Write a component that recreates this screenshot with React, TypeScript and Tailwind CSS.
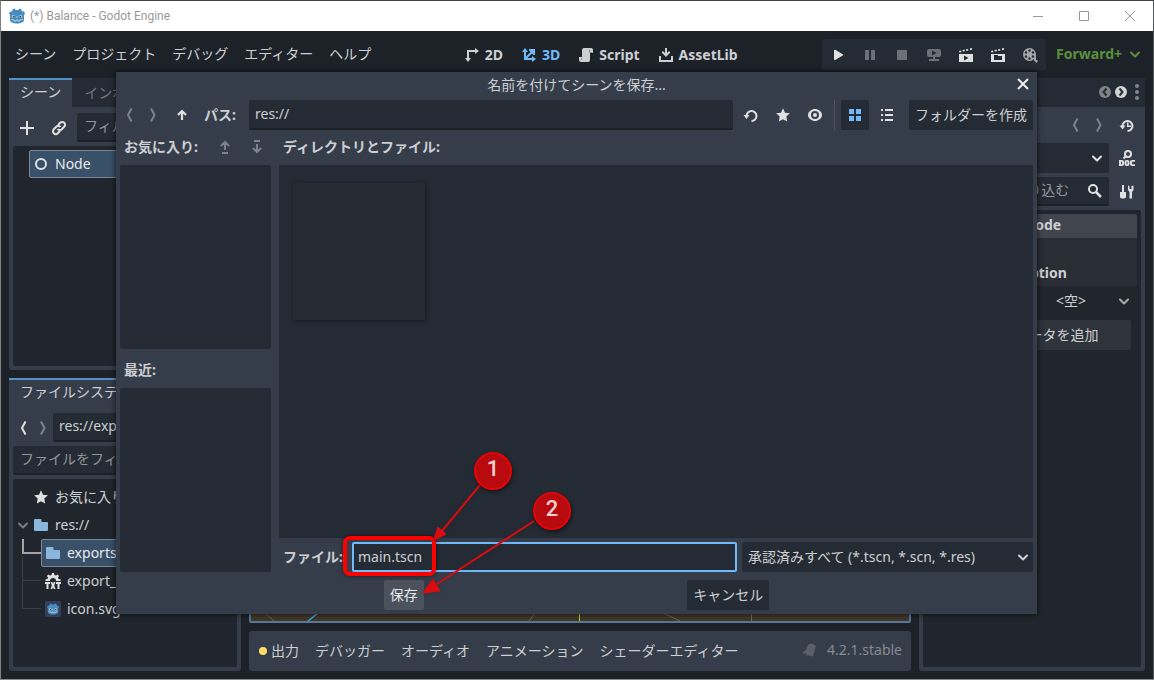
import type { ReactNode } from "react";

function Icon({ children, className = "" }: { children: ReactNode; className?: string }) {
  return (
    <svg viewBox="0 0 16 16" className={`size-4 shrink-0 ${className}`} fill="currentColor" aria-hidden="true">
      {children}
    </svg>
  );
}

function Stroke({ d, className = "", width = 2 }: { d: string; className?: string; width?: number }) {
  return (
    <Icon className={className}>
      <path d={d} fill="none" stroke="currentColor" strokeWidth={width} />
    </Icon>
  );
}

const ChevronLeft = ({ className = "" }) => <Stroke className={className} d="M10.500 1.500 7 8l3.500 6.500" />;
const ChevronRight = ({ className = "" }) => <Stroke className={className} d="M6 1.500 9.500 8 6 14.500" />;
const ChevronDown = ({ className = "" }) => (
  <Icon className={className}>
    <path d="m4 6.500 4 4 4-4" fill="none" stroke="currentColor" strokeWidth="2" strokeLinecap="round" strokeLinejoin="round" />
  </Icon>
);
const Star = ({ className = "" }) => (
  <Icon className={className}>
    <path d="M8 1.200 10 5.700l4.900.6-3.600 3.300.9 5L8 12.200l-4.200 2.400.9-5L1.100 6.300 6 5.700z" />
  </Icon>
);
const Folder = () => (
  <Icon className="text-[#8ab6dd]">
    <path d="M1 3a1 1 0 0 1 1-1h5.500a1 1 0 0 1 1 1v2H14a1 1 0 0 1 1 1v7a1 1 0 0 1-1 1H2a1 1 0 0 1-1-1z" />
  </Icon>
);

function GodotHead({ className = "" }: { className?: string }) {
  return (
    <svg viewBox="0 0 16 16" className={`size-4 shrink-0 ${className}`} aria-hidden="true">
      <path fill="#478cbf" d="M5.500.500 6.500 2h3l1-1.500 2 .8v1.500l1.300.7L15 3.500l1 2-1 1.500v5c0 2-3.200 3.500-7 3.500S1 14 1 12V7L0 5.500l1-2 1.200.3 1.300-1V1.300z" />
      <circle cx="4.400" cy="8.600" r="1.500" fill="#dfe9f2" />
      <circle cx="11.600" cy="8.600" r="1.500" fill="#dfe9f2" />
      <circle cx="4.600" cy="8.700" r="1" fill="#414042" />
      <circle cx="11.400" cy="8.700" r="1" fill="#414042" />
      <path d="M8 8v2M2 11.500l3 .4.300 1.300h1.500l.3-1.200h1.800l.3 1.200h1.500l.3-1.300 3-.4" stroke="#dfe9f2" strokeWidth=".7" fill="none" />
    </svg>
  );
}

function TitleBar() {
  return (
    <header className="flex h-[30px] items-center bg-white pl-2 text-[#999999]">
      <GodotHead />
      <span className="ml-[5px] flex-1 font-['Roboto',sans-serif] text-xs">(*) Balance - Godot Engine</span>
      <button aria-label="最小化" className="flex h-full w-[46px] items-center justify-center">
        <Stroke width={1} d="M3 8.500h10" />
      </button>
      <button aria-label="最大化" className="flex h-full w-[46px] items-center justify-center">
        <Stroke width={1} d="M3.500 3.500h9v9h-9z" />
      </button>
      <button aria-label="閉じる" className="flex h-full w-[46px] items-center justify-center">
        <Stroke width={1} d="m3 3 10 10M13 3 3 13" />
      </button>
    </header>
  );
}

function ModeButton({ label, icon, active = false }: { label: string; icon: ReactNode; active?: boolean }) {
  return (
    <button className={`flex items-center gap-[5px] font-bold ${active ? "text-[#70bafa]" : "text-[#cdcfd2]"}`}>
      {icon}
      {label}
    </button>
  );
}

function RunButton({ label, dim = false, children }: { label: string; dim?: boolean; children: ReactNode }) {
  return (
    <button aria-label={label} className={`flex h-full w-8 items-center justify-center ${dim ? "text-[#6c7078]" : "text-[#e0e0e0]"}`}>
      <Icon>{children}</Icon>
    </button>
  );
}

function MenuBar() {
  return (
    <div className="flex items-center px-2 py-2">
      <nav className="flex gap-4 pb-[2px] pl-[6px] pr-2">
        {["シーン", "プロジェクト", "デバッグ", "エディター", "ヘルプ"].map((m) => (
          <button key={m}>{m}</button>
        ))}
      </nav>
      <div className="flex flex-1 justify-center gap-[18px]">
        <ModeButton
          label="2D"
          icon={
            <Icon>
              <path d="M3 3h8V1l4 3-4 3V5H5v6h2l-3 4-3-4h2z" />
            </Icon>
          }
        />
        <ModeButton
          active
          label="3D"
          icon={
            <Icon>
              <path d="M3 5H1l3-4 3 4H5v4.600l4.600-4.600L8 3.500V2h6v6h-1.500L11 6.400 6.400 11H11V9l4 3-4 3v-2H3z" />
            </Icon>
          }
        />
        <ModeButton
          label="Script"
          icon={
            <Icon>
              <path d="M6 1a2 2 0 0 0-2 2v7H1v3a2 2 0 0 0 2 2h7a2 2 0 0 0 2-2V6h3V3a2 2 0 0 0-2-2z" />
              <path d="M11.500 2.500V5.500h3M3.500 11v2" stroke="#8b8d90" fill="none" />
            </Icon>
          }
        />
        <ModeButton
          label="AssetLib"
          icon={
            <Icon>
              <path d="M7 1h2v5l2-2 1.400 1.400L8 10 3.600 5.400 5 4l2 2zM1 9h2v4h10V9h2v6H1z" />
            </Icon>
          }
        />
      </div>
      <div className="flex h-[31px] rounded-[3px] bg-[#252b34]">
        <RunButton label="実行">
          <path d="M4 3.500a.8.800 0 0 1 1.200-.7l7.500 4.400a.8.800 0 0 1 0 1.400l-7.500 4.400a.8.800 0 0 1-1.200-.7z" />
        </RunButton>
        <RunButton label="一時停止" dim>
          <path d="M3 3h4v10H3zM9 3h4v10H9z" />
        </RunButton>
        <RunButton label="停止" dim>
          <path d="M3 3h10v10H3z" />
        </RunButton>
        <RunButton label="リモートデバッグ" dim>
          <path fillRule="evenodd" d="M3 2h10a2 2 0 0 1 2 2v4a2 2 0 0 1-2 2H9v2h4v2H3v-2h4v-2H3a2 2 0 0 1-2-2V4a2 2 0 0 1 2-2zm3 1.500v5L10.500 6z" />
        </RunButton>
        <RunButton label="現在のシーンを実行">
          <path fillRule="evenodd" d="M1 7h14v8H1zm5 1.500v5l4.500-2.500z" />
          <path d="m1 4 2-.4.400 1.600-2 .4zM4.500 3l2-.4.400 1.600-2 .4zM8 2.300l2-.4.400 1.600-2 .4zM11.800 1.500l2-.4.400 1.600-2 .4z" />
        </RunButton>
        <RunButton label="選択したシーンを実行">
          <path fillRule="evenodd" d="M1 7h14v8H1zm3 1v5h8V9H8V8z" />
          <path d="m1 4 2-.4.400 1.600-2 .4zM4.500 3l2-.4.400 1.600-2 .4zM8 2.300l2-.4.400 1.600-2 .4zM11.800 1.500l2-.4.400 1.600-2 .4z" />
        </RunButton>
        <RunButton label="ムービー">
          <g className="text-[#a5a7aa]" fill="currentColor">
            <path d="M12 8h2v5h1.500v2.500H14l-2-2z" />
            <circle cx="7.500" cy="7.500" r="6.500" />
          </g>
          <g fill="#252b34">
            <circle cx="7.500" cy="3.500" r="1.200" />
            <circle cx="4" cy="5.500" r="1.200" />
            <circle cx="11" cy="5.500" r="1.200" />
            <circle cx="4" cy="9.500" r="1.200" />
            <circle cx="11" cy="9.500" r="1.200" />
            <circle cx="7.500" cy="11.500" r="1.200" />
          </g>
        </RunButton>
      </div>
      <button className="ml-[10px] flex items-center gap-[5px] pb-px pr-[2px] font-bold text-[#5b8f3c]">
        Forward+
        <ChevronDown />
      </button>
    </div>
  );
}

const fieldClass = "min-w-0 rounded-[2px] border-b-2 border-[#1c2127] bg-[#252b34] pb-[2px] placeholder:text-[#92959b] outline-none";
const tabClass = "border-t-2 border-[#5391c9] bg-[#363d4a] px-[11px] pb-[3px]";

function SceneDock() {
  return (
    <section className="flex min-h-0 flex-1 flex-col rounded-[3px] bg-[#363d4a]">
      <div className="flex h-[29px] bg-[#252b34]">
        <button className={tabClass}>シーン</button>
        <button className="px-3 text-[#73777e]">インポート</button>
      </div>
      <div className="flex flex-1 flex-col px-1 pb-1 pt-[6px]">
        <div className="flex h-[29px] items-center">
          <button aria-label="ノードを追加" className="flex w-[28px] justify-center text-[#e0e0e0]">
            <Stroke d="M8 1v14M1 8h14" />
          </button>
          <button aria-label="シーンをインスタンス化" className="ml-1 flex w-[28px] justify-center text-[#e0e0e0]">
            <Stroke d="m7 5 2.200-2.200a2.800 2.800 0 0 1 4 4L10.500 9.500A2.800 2.800 0 0 1 6.500 9M9 11l-2.200 2.200a2.800 2.800 0 0 1-4-4L5.500 6.500A2.800 2.800 0 0 1 9.500 7" />
          </button>
          <input aria-label="ノードのフィルター" placeholder="フィルター" className={`ml-1 h-full flex-1 px-[7px] ${fieldClass}`} />
        </div>
        <div className="mt-1 flex-1 rounded-[2px] bg-[#21262e] py-1 pl-4">
          <button className="flex h-7 w-full items-center gap-[6px] rounded-[2px] border border-[#7b8793] bg-[#385068] pl-[3px] text-[#e8eaec]">
            <Icon>
              <circle cx="8" cy="8" r="5" fill="none" stroke="#e0e0e0" strokeWidth="2" />
            </Icon>
            Node
          </button>
        </div>
      </div>
    </section>
  );
}

function FileSystemDock() {
  return (
    <section className="flex h-[293px] flex-col rounded-[3px] bg-[#363d4a]">
      <div className="flex h-[29px] bg-[#252b34]">
        <button className={tabClass}>ファイルシステム</button>
      </div>
      <div className="flex flex-1 flex-col gap-1 px-1 pb-1 pt-[6px]">
        <div className="flex h-[29px] items-center">
          <button aria-label="戻る" className="flex w-5 justify-center text-[#e0e0e0]"><ChevronLeft /></button>
          <button aria-label="進む" className="flex w-5 justify-center text-[#7c818a]"><ChevronRight /></button>
          <input aria-label="現在のパス" defaultValue="res://exports" className={`h-full flex-1 px-[6px] ${fieldClass}`} />
        </div>
        <input aria-label="ファイルのフィルター" placeholder="ファイルをフィルター" className={`h-[29px] px-[7px] ${fieldClass}`} />
        <ul className="flex-1 rounded-[2px] bg-[#21262e] py-1">
          <li className="flex h-7 items-center gap-[6px] pl-5">
            <Star className="text-[#e0e0e0]" />
            お気に入り:
          </li>
          <li className="flex h-7 items-center pl-[2px]">
            <ChevronDown className="text-[#797d83]" />
            <span className="flex items-center gap-[6px] pl-[2px]">
              <Folder />
              res://
            </span>
          </li>
          <li className="flex h-7 items-center">
            <svg viewBox="0 0 28 28" className="h-7 w-7 shrink-0" fill="none" aria-hidden="true">
              <path d="M10 0v14h18" stroke="#a2a4a7" strokeWidth="2" />
              <path d="M9.500 17v11" stroke="#3b4048" />
            </svg>
            <button className="flex h-7 flex-1 items-center gap-[6px] rounded-[2px] border border-[#7b8793] bg-[#385068] pl-[3px] text-[#e8eaec]">
              <Folder />
              exports
            </button>
          </li>
          <li className="flex h-7 items-center">
            <svg viewBox="0 0 28 28" className="h-7 w-7 shrink-0" fill="none" aria-hidden="true">
              <path d="M9.500 0v28M9.500 13.500h18.500" stroke="#3b4048" />
            </svg>
            <span className="flex items-center gap-[6px] pl-1">
              <Icon className="text-[#e0e0e0]">
                <path fillRule="evenodd" d="M7 0h2l.4 2 1.500.6 1.700-1.100 1.400 1.400L13 4.600l.6 1.400 2 .4V8H11a3 3 0 0 0-6 0H.4V6.400l2-.4L3 4.600 1.900 2.900l1.400-1.400L5 2.600 6.500 2z" />
                <path d="M0 9h5v2H3.500v5h-2v-5H0zM5.500 9h1.800l.7 2 .7-2h1.800L9.200 12.500l1.300 3.500H8.700L8 14l-.7 2H5.500l1.300-3.500zM11 9h5v2h-1.500v5h-2v-5H11z" />
              </Icon>
              export_presets.cfg
            </span>
          </li>
          <li className="flex h-7 items-center">
            <svg viewBox="0 0 28 28" className="h-7 w-7 shrink-0" fill="none" aria-hidden="true">
              <path d="M9.500 0v13.500h18.500" stroke="#3b4048" />
            </svg>
            <span className="flex items-center gap-[6px] pl-1">
              <span className="flex size-4 items-center justify-center rounded-[2px] bg-[#363d5a]">
                <GodotHead className="scale-75" />
              </span>
              icon.svg
            </span>
          </li>
        </ul>
      </div>
    </section>
  );
}

function Center() {
  return (
    <main className="flex min-w-0 flex-1 flex-col gap-2">
      <div className="flex flex-1 flex-col justify-end rounded-[2px] border-2 border-[#567898] bg-[#423529]">
        <svg viewBox="0 0 658 8" preserveAspectRatio="none" className="h-2 w-full" fill="none" aria-hidden="true">
          <path d="m14 0 9 8M284 0l-6 8M412 0l17 8M500.500 0v8" stroke="#6f665c" />
          <path d="m67 0-10 8" stroke="#38a4f0" strokeWidth="1.500" />
          <path d="M328.500 0v8" stroke="#a4dc1c" />
        </svg>
      </div>
      <div className="flex h-10 items-center gap-4 rounded-[3px] bg-[#363d4a] pl-[10px] pr-[9px]">
        <button className="flex items-center gap-1">
          <span className="size-2 rounded-full bg-[#ffdd65]" />
          出力
        </button>
        {["デバッガー", "オーディオ", "アニメーション", "シェーダーエディター"].map((t) => (
          <button key={t}>{t}</button>
        ))}
        <span className="ml-auto flex items-center gap-[9px] pb-[2px] text-[#868a92]">
          <Icon className="text-[#5a5f69]">
            <path d="M10 1.500c-4 0-5 3-5.500 5.500L1 10.500v1h3a2 2 0 0 0 3 2l4 1 .5-2.500 1.500-5 .8-3z" />
          </Icon>
          4.2.1.stable
        </span>
      </div>
    </main>
  );
}

function Inspector() {
  return (
    <aside className="flex w-[226px] flex-col rounded-[3px] bg-[#363d4a]">
      <div className="flex h-[29px] items-stretch bg-[#252b34]">
        <button className={tabClass}>インスペクター</button>
        <div className="ml-auto flex items-center pb-[2px]">
          <button aria-label="前のタブ" className="text-[#808387]">
            <Icon>
              <circle cx="8" cy="8" r="6" />
              <path d="M9.500 4.500 6.500 8l3 3.500" stroke="#252b34" strokeWidth="2" fill="none" />
            </Icon>
          </button>
          <button aria-label="次のタブ" className="text-[#d4d5d7]">
            <Icon>
              <circle cx="8" cy="8" r="6" />
              <path d="m6.500 4.500 3 3.500-3 3.500" stroke="#252b34" strokeWidth="2" fill="none" />
            </Icon>
          </button>
          <button aria-label="メニュー" className="text-[#80838a]">
            <Icon>
              <circle cx="8" cy="2" r="2" />
              <circle cx="8" cy="8" r="2" />
              <circle cx="8" cy="14" r="2" />
            </Icon>
          </button>
        </div>
      </div>
      <div className="flex flex-1 flex-col gap-1 p-1">
        <div className="flex h-7 items-center justify-end pr-[6px] text-[#7c818a]">
          <button aria-label="戻る" className="w-6"><ChevronLeft /></button>
          <button aria-label="進む" className="w-6"><ChevronRight /></button>
          <button aria-label="履歴" className="ml-1 text-[#e0e0e0]">
            <Icon>
              <path d="M3.500 9a5 5 0 1 1 5 5" fill="none" stroke="currentColor" strokeWidth="2" />
              <path d="M.5 8.500h6l-3 4zM8 5.500h1.500v3H12V10H8z" />
            </Icon>
          </button>
        </div>
        <div className="flex h-[30px] items-center gap-[10px] pr-[6px]">
          <div className="relative h-full flex-1">
            <select aria-label="オブジェクト" className="h-full w-full appearance-none rounded-[2px] bg-[#252b34] pl-2">
              <option>Node</option>
            </select>
            <ChevronDown className="pointer-events-none absolute right-1 top-[7px] text-[#e0e0e0]" />
          </div>
          <button aria-label="ドキュメントを開く" className="text-[#e0e0e0]">
            <Icon>
              <circle cx="9" cy="4" r="3" fill="none" stroke="currentColor" strokeWidth="2" />
              <path d="M7 6 4.500 8.500" stroke="currentColor" strokeWidth="2" />
              <path fillRule="evenodd" d="M0 10h3a2 2 0 0 1 2 2v2a2 2 0 0 1-2 2H0zm2 1.800v2.400h1v-2.400zM7.500 10h1A2.200 2.200 0 0 1 10.500 12v2a2 2 0 0 1-2 2h-1a2 2 0 0 1-2-2v-2a2 2 0 0 1 2-2zm0 1.800v2.400h1v-2.400zM13 10h3v1.800h-3v2.400h3V16h-3a2 2 0 0 1-2-2v-2a2 2 0 0 1 2-2z" />
            </Icon>
          </button>
        </div>
        <div className="flex h-[29px] items-center gap-[10px] pr-[6px]">
          <div className="relative h-full flex-1">
            <input aria-label="プロパティの絞り込み" placeholder="プロパティを絞り込む" className={`h-full w-full px-[7px] ${fieldClass}`} />
            <Icon className="pointer-events-none absolute right-[6px] top-[6px] text-[#e0e0e0]">
              <circle cx="6" cy="6" r="4" fill="none" stroke="currentColor" strokeWidth="2" />
              <path d="m9 9 5 5" stroke="currentColor" strokeWidth="2.500" />
            </Icon>
          </div>
          <button aria-label="設定" className="text-[#e0e0e0]">
            <Icon>
              <path d="M3 1h2v7h2v4a2 2 0 0 1-2 2.500H3A2 2 0 0 1 1 12V8h2zM9 1.500l1.500.5v3h2V2l2-.5V6L13 8v6.500h-2.500V8L9 6z" />
            </Icon>
          </button>
        </div>
        <div className="flex-1 rounded-[2px] bg-[#21262e] p-1">
          <div className="flex h-6 items-center justify-center gap-[5px] rounded-t-[2px] bg-[#41454e] pb-[2px] font-bold">
            <Icon>
              <circle cx="8" cy="8" r="5" fill="none" stroke="#e0e0e0" strokeWidth="2" />
            </Icon>
            Node
          </div>
          <div className="flex h-12 items-end bg-[#292d35] pb-[3px] pl-[14px] font-bold">Editor Description</div>
          <div className="flex h-[30px] items-center pl-[129px] pr-[5px]">
            <button className="flex flex-1 items-center justify-between">
              &lt;空&gt;
              <ChevronDown className="text-[#a9abae]" />
            </button>
          </div>
          <button className="mr-[6px] mt-1 flex h-[30px] w-[204px] items-center justify-center gap-1 rounded-[2px] bg-[#2f333c] pl-[7px]">
            <Stroke d="M8 2v12M2 8h12" />
            メタデータを追加
          </button>
        </div>
      </div>
    </aside>
  );
}

function ToolButton({ label, className = "", children }: { label: string; className?: string; children: ReactNode }) {
  return (
    <button aria-label={label} className={`flex h-full items-center justify-center rounded-[2px] ${className}`}>
      {children}
    </button>
  );
}

function Annotations() {
  return (
    <div className="pointer-events-none absolute inset-0 font-['Roboto',sans-serif] text-[22px] font-medium leading-none text-[#f6d0d2]">
      <div className="absolute left-[227px] top-[464px] h-[40px] w-[93px] rounded-[7px] border-4 border-[#ff0000] shadow-[0_0_4px_rgba(0,0,0,0.6)]" />
      <svg className="absolute left-0 top-0 h-[542px] w-[500px] drop-shadow-sm" viewBox="0 0 500 542" aria-hidden="true">
        <g fill="#d80c10" stroke="#d80c10">
          <path d="M364 413 326 459M418 449 321 512" strokeWidth="2" />
          <path d="m317 469 5-14 8 7zM307 521l10-14 7 12z" strokeWidth="1" />
        </g>
      </svg>
      <span className="absolute left-[358px] top-[380px] flex size-[38px] items-center justify-center rounded-full border-2 border-[#e30408] bg-[#b90a0f] pb-1 shadow-[1px_2px_4px_rgba(0,0,0,0.5)]">1</span>
      <span className="absolute left-[417px] top-[420px] flex size-[38px] items-center justify-center rounded-full border-2 border-[#e30408] bg-[#b90a0f] pb-1 shadow-[1px_2px_4px_rgba(0,0,0,0.5)]">2</span>
    </div>
  );
}

function SaveDialog() {
  return (
    <div
      role="dialog"
      aria-label="名前を付けてシーンを保存..."
      className="absolute left-[115px] right-[116px] top-[71px] bg-[#363d4a] px-1 pb-1 shadow-[0_0_5px_1px_rgba(0,0,0,0.55)]"
    >
      <div className="relative flex h-7 items-center justify-center pb-[2px]">
        名前を付けてシーンを保存...
        <button aria-label="閉じる" className="absolute right-[2px] top-1 text-[#eeeeee]">
          <Stroke d="m3 3 10 10M13 3 3 13" />
        </button>
      </div>

      <div className="flex h-[30px] items-center text-[#e0e0e0]">
        <ToolButton label="戻る" className="w-[18px] text-[#7c818a]"><ChevronLeft /></ToolButton>
        <ToolButton label="進む" className="ml-[6px] w-[18px] text-[#7c818a]"><ChevronRight /></ToolButton>
        <ToolButton label="上へ" className="ml-[6px] w-[28px]">
          <Icon>
            <path d="M8 13V5M4 8l4-4 4 4" fill="none" stroke="currentColor" strokeWidth="2.200" strokeLinejoin="round" />
          </Icon>
        </ToolButton>
        <label htmlFor="path" className="ml-2 w-[45px] font-bold text-[#cdcfd2]">パス:</label>
        <input id="path" defaultValue="res://" className={`h-full flex-1 px-[6px] text-[#cdcfd2] ${fieldClass}`} />
        <ToolButton label="再読み込み" className="ml-1 w-7">
          <Icon>
            <path d="M3.500 9a5 5 0 1 1 5 5" fill="none" stroke="currentColor" strokeWidth="2" />
            <path d="M.5 8h6l-3 4z" />
          </Icon>
        </ToolButton>
        <ToolButton label="お気に入り" className="ml-1 w-7"><Star /></ToolButton>
        <ToolButton label="隠しファイル" className="ml-1 w-7">
          <Icon>
            <path fillRule="evenodd" d="M8 2c3 0 7 2.500 7 6s-4 6-7 6-7-2.500-7-6 4-6 7-6zm0 2a4 4 0 1 0 0 8 4 4 0 0 0 0-8z" />
            <circle cx="8" cy="8" r="2" />
          </Icon>
        </ToolButton>
        <span className="ml-[5px] mr-[6px] h-full w-px bg-[#4e545f]" />
        <ToolButton label="グリッド表示" className="w-7 bg-[#252b34] text-[#70bafa]">
          <Icon>
            <path d="M2 2h5v5H2zM9 2h5v5H9zM2 9h5v5H2zM9 9h5v5H9z" />
          </Icon>
        </ToolButton>
        <ToolButton label="リスト表示" className="ml-1 w-7">
          <Icon>
            <path d="M2 2h2v2H2zM6 2h8v2H6zM2 7h2v2H2zM6 7h8v2H6zM2 12h2v2H2zM6 12h8v2H6z" />
          </Icon>
        </ToolButton>
        <button className="ml-2 h-full rounded-[2px] bg-[#252b34] px-[6px] text-[#cdcfd2]">フォルダーを作成</button>
      </div>

      <div className="flex gap-2 pt-[2px]">
        <div className="flex w-[151px] flex-col">
          <div className="flex h-[33px] items-center pb-[3px] pl-1 text-[#7c818a]">
            <span className="flex-1 font-bold text-[#cdcfd2]">お気に入り:</span>
            <ToolButton label="上に移動" className="mr-1 w-7">
              <Icon>
                <path d="M8 11V3M4 7l4-4 4 4" fill="none" stroke="currentColor" strokeWidth="2" />
                <path d="M5 13h6v2H5z" />
              </Icon>
            </ToolButton>
            <ToolButton label="下に移動" className="w-7">
              <Icon>
                <path d="M8 5v8M4 9l4 4 4-4" fill="none" stroke="currentColor" strokeWidth="2" />
                <path d="M5 1h6v2H5z" />
              </Icon>
            </ToolButton>
          </div>
          <div className="h-[184px] rounded-[2px] bg-[#252b34]" />
          <div className="flex h-[39px] items-center pl-1 pt-[2px] font-bold">最近:</div>
          <div className="h-[184px] rounded-[2px] bg-[#252b34]" />
        </div>
        <div className="flex min-w-0 flex-1 flex-col">
          <div className="flex h-[33px] items-center pb-[3px] pl-1 font-bold">ディレクトリとファイル:</div>
          <div className="flex-1 rounded-[2px] bg-[#252b34] pl-[14px] pt-[18px]">
            <div className="h-[137px] w-[132px] bg-[#262a33] shadow-[1px_1px_4px_rgba(20,20,28,0.8)]" />
          </div>
          <div className="mt-1 flex h-[30px] items-center gap-[5px]">
            <label htmlFor="file" className="w-[68px] pl-1 font-bold">ファイル:</label>
            <input id="file" defaultValue="main.tscn" className="h-full min-w-0 flex-1 rounded-[2px] border-2 border-[#70bafa] bg-[#252b34] px-1 pb-[2px] outline-none" />
            <div className="relative h-full w-[291px]">
              <select aria-label="ファイルの種類" className="h-full w-full appearance-none rounded-[2px] bg-[#252b34] pl-[6px]">
                <option>承認済みすべて (*.tscn, *.scn, *.res)</option>
              </select>
              <ChevronDown className="pointer-events-none absolute right-[2px] top-[7px]" />
            </div>
          </div>
        </div>
      </div>

      <div className="mt-2 flex h-[30px] justify-evenly">
        <button className="rounded-[2px] bg-[#4b515d] px-[6px] text-[#e6e7e9]">保存</button>
        <button className="rounded-[2px] bg-[#252b34] px-[6px]">キャンセル</button>
      </div>
      <Annotations />
    </div>
  );
}

export default function App() {
  return (
    <div className="relative flex min-h-screen flex-col border border-b-[#8b8b8b] border-l-[#7f7f7d] border-r-[#55585c] border-t-[#45443f] bg-[#1d2229] font-['Noto_Sans','Noto_Sans_CJK_JP',sans-serif] text-sm text-[#cdcfd2]">
      <TitleBar />
      <MenuBar />
      <div className="flex flex-1 gap-2 px-2 pb-2 whitespace-nowrap">
        <div className="flex w-[232px] flex-col gap-2">
          <SceneDock />
          <FileSystemDock />
        </div>
        <Center />
        <Inspector />
      </div>
      <SaveDialog />
    </div>
  );
}
